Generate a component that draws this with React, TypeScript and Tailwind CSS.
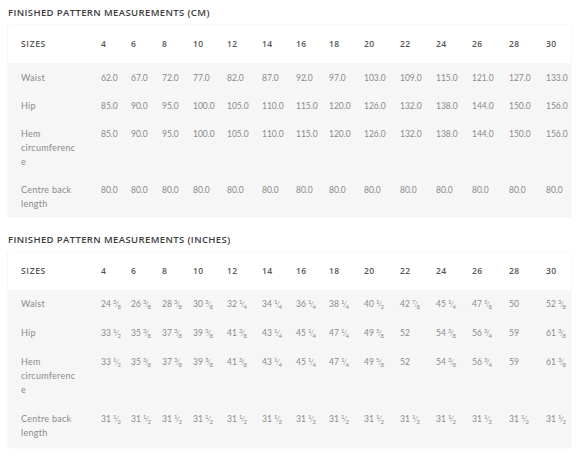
import type { ReactNode } from "react";

const sizes = ["4", "6", "8", "10", "12", "14", "16", "18", "20", "22", "24", "26", "28", "30"];

const cols = [
  "w-[80px]",
  "w-[30px]",
  "w-[31px]",
  "w-[31px]",
  "w-[34px]",
  "w-[35px]",
  "w-[34px]",
  "w-[33px]",
  "w-[35px]",
  "w-[36px]",
  "w-[36px]",
  "w-[36px]",
  "w-[37px]",
  "w-[37px]",
  "w-[38px]",
];

const cmRows = [
  { label: "Waist", values: ["62.0", "67.0", "72.0", "77.0", "82.0", "87.0", "92.0", "97.0", "103.0", "109.0", "115.0", "121.0", "127.0", "133.0"] },
  { label: "Hip", values: ["85.0", "90.0", "95.0", "100.0", "105.0", "110.0", "115.0", "120.0", "126.0", "132.0", "138.0", "144.0", "150.0", "156.0"] },
  { label: "Hem circumference", values: ["85.0", "90.0", "95.0", "100.0", "105.0", "110.0", "115.0", "120.0", "126.0", "132.0", "138.0", "144.0", "150.0", "156.0"] },
  { label: "Centre back length", values: Array(14).fill("80.0") },
];

const inchRows = [
  { label: "Waist", values: ["24 3/8", "26 3/8", "28 3/8", "30 3/8", "32 1/4", "34 1/4", "36 1/4", "38 1/4", "40 1/2", "42 7/8", "45 1/4", "47 5/8", "50", "52 3/8"] },
  { label: "Hip", values: ["33 1/2", "35 3/8", "37 3/8", "39 3/8", "41 3/8", "43 1/4", "45 1/4", "47 1/4", "49 5/8", "52", "54 3/8", "56 3/4", "59", "61 3/8"] },
  { label: "Hem circumference", values: ["33 1/2", "35 3/8", "37 3/8", "39 3/8", "41 3/8", "43 1/4", "45 1/4", "47 1/4", "49 5/8", "52", "54 3/8", "56 3/4", "59", "61 3/8"] },
  { label: "Centre back length", values: Array(14).fill("31 1/2") },
];

// "24 3/8" -> 24 with a small fraction
function Value({ v }: { v: string }) {
  const [whole, frac] = v.split(" ");
  if (!frac) return <>{whole}</>;
  const [num, den] = frac.split("/");
  return (
    <>
      {whole}{" "}
      <span className="whitespace-nowrap">
        <sup className="text-[6px]">{num}</sup>
        <span className="text-[7px]">⁄</span>
        <sub className="text-[6px]">{den}</sub>
      </span>
    </>
  );
}

function SizeTable({
  title,
  rows,
  rowPad,
}: {
  title: string;
  rows: { label: string; values: string[] }[];
  rowPad: string;
}) {
  return (
    <section>
      <h2 className="pl-2 text-[9.5px] leading-[14px] font-semibold tracking-[0.04em] text-[#3d3d3d] font-['Open_Sans',sans-serif]">
        {title}
      </h2>
      <table className="mt-[5px] ml-2 w-[563px] table-fixed border-collapse shadow-[0_0_2px_rgba(0,0,0,0.05)]">
        <colgroup>
          {cols.map((c, i) => (
            <col key={i} className={c} />
          ))}
        </colgroup>
        <thead>
          <tr className="bg-white shadow-[0_1px_2px_rgba(0,0,0,0.07)]">
            <th className="pl-[13px] py-3 text-left text-[8.5px] leading-[14px] font-semibold tracking-[0.08em] text-[#555] font-['Open_Sans',sans-serif]">
              SIZES
            </th>
            {sizes.map((s) => (
              <th
                key={s}
                className="pl-[13px] py-3 text-left text-[8.5px] leading-[14px] font-semibold tracking-[0.06em] text-[#555] font-['Open_Sans',sans-serif]"
              >
                {s}
              </th>
            ))}
          </tr>
        </thead>
        <tbody className="bg-[#f6f6f6]">
          {rows.map((r) => (
            <tr key={r.label}>
              <td
                className={`${rowPad} pl-[13px] pr-[12px] align-top text-[9px] leading-[14px] text-[#8a8a8a] tracking-[0.03em] [overflow-wrap:anywhere] font-['Lato',sans-serif]`}
              >
                {r.label}
              </td>
              {r.values.map((v, i) => (
                <td
                  key={i}
                  className={`${rowPad} pl-[13px] align-top whitespace-nowrap text-[8.5px] leading-[14px] text-[#8a8a8a] font-['Lato',sans-serif]`}
                >
                  <Value v={v} />
                </td>
              ))}
            </tr>
          ))}
        </tbody>
      </table>
    </section>
  );
}

export default function App(): ReactNode {
  return (
    <div className="w-[580px] h-[457px] bg-white pt-[6px] overflow-hidden flex flex-col gap-4">
      <SizeTable title="FINISHED PATTERN MEASUREMENTS (CM)" rows={cmRows} rowPad="pt-[8px] pb-[6px]" />
      <SizeTable title="FINISHED PATTERN MEASUREMENTS (INCHES)" rows={inchRows} rowPad="pt-[7px] pb-[8px]" />
    </div>
  );
}
